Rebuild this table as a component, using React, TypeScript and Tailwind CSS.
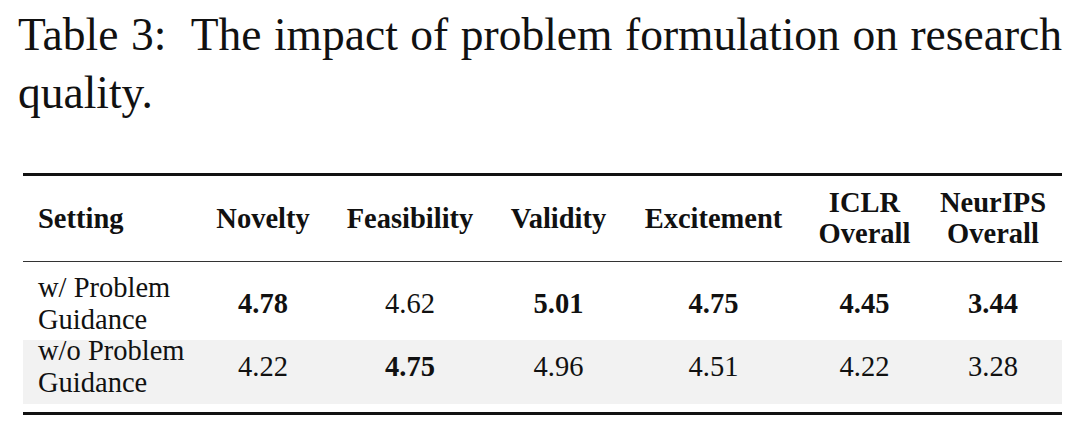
const headers: { label: string[]; align?: "left" }[] = [
  { label: ["Setting"], align: "left" },
  { label: ["Novelty"] },
  { label: ["Feasibility"] },
  { label: ["Validity"] },
  { label: ["Excitement"] },
  { label: ["ICLR", "Overall"] },
  { label: ["NeurIPS", "Overall"] },
];

type Row = {
  setting: string[];
  values: { v: string; best?: boolean }[];
  shaded?: boolean;
};

const rows: Row[] = [
  {
    setting: ["w/ Problem", "Guidance"],
    values: [
      { v: "4.78", best: true },
      { v: "4.62" },
      { v: "5.01", best: true },
      { v: "4.75", best: true },
      { v: "4.45", best: true },
      { v: "3.44", best: true },
    ],
  },
  {
    setting: ["w/o Problem", "Guidance"],
    shaded: true,
    values: [
      { v: "4.22" },
      { v: "4.75", best: true },
      { v: "4.96" },
      { v: "4.51" },
      { v: "4.22" },
      { v: "3.28" },
    ],
  },
];

const cols = "grid grid-cols-[172px_136px_158px_139px_171px_131px_126px]";

export default function App() {
  return (
    <div className="h-[444px] w-[1080px] overflow-hidden bg-white font-['Liberation_Serif','Times_New_Roman',serif] text-[#111]">
      <p className="ml-[18px] w-[1044px] pt-[6px] text-justify text-[45.5px] leading-[58px]">
        Table 3:{"\u00a0"} The impact of problem formulation on research quality.
      </p>

      <div className="ml-[23px] mt-[51px] w-[1039px] border-t-[3px] border-[#111] text-[28.5px]">
        {/* header */}
        <div className={`${cols} h-[85.5px] items-center border-b-[1.5px] border-[#333] font-bold leading-[31px]`}>
          {headers.map((h) => (
            <div
              key={h.label.join(" ")}
              className={h.align === "left" ? "pl-[15px] text-left" : "text-center"}
            >
              {h.label.map((line) => (
                <div key={line}>{line}</div>
              ))}
            </div>
          ))}
        </div>

        {/* body */}
        {rows.map((row) => (
          <div
            key={row.setting.join(" ")}
            className={
              row.shaded
                ? `${cols} h-[64px] items-center bg-[#f2f2f2] leading-[32px]`
                : `${cols} h-[78px] items-start pt-[10px] leading-[32px]`
            }
          >
            <div className={row.shaded ? "-mt-[9px] pl-[15px]" : "pl-[15px]"}>
              {row.setting.map((line) => (
                <div key={line}>{line}</div>
              ))}
            </div>
            {row.values.map((cell, i) => (
              <div
                key={i}
                className={`${row.shaded ? "-mt-[9px]" : "pt-[16px]"} text-center ${cell.best ? "font-bold" : ""}`}
              >
                {cell.v}
              </div>
            ))}
          </div>
        ))}

        <div className="mt-[8px] border-t-[3px] border-[#111]" />
      </div>
    </div>
  );
}
